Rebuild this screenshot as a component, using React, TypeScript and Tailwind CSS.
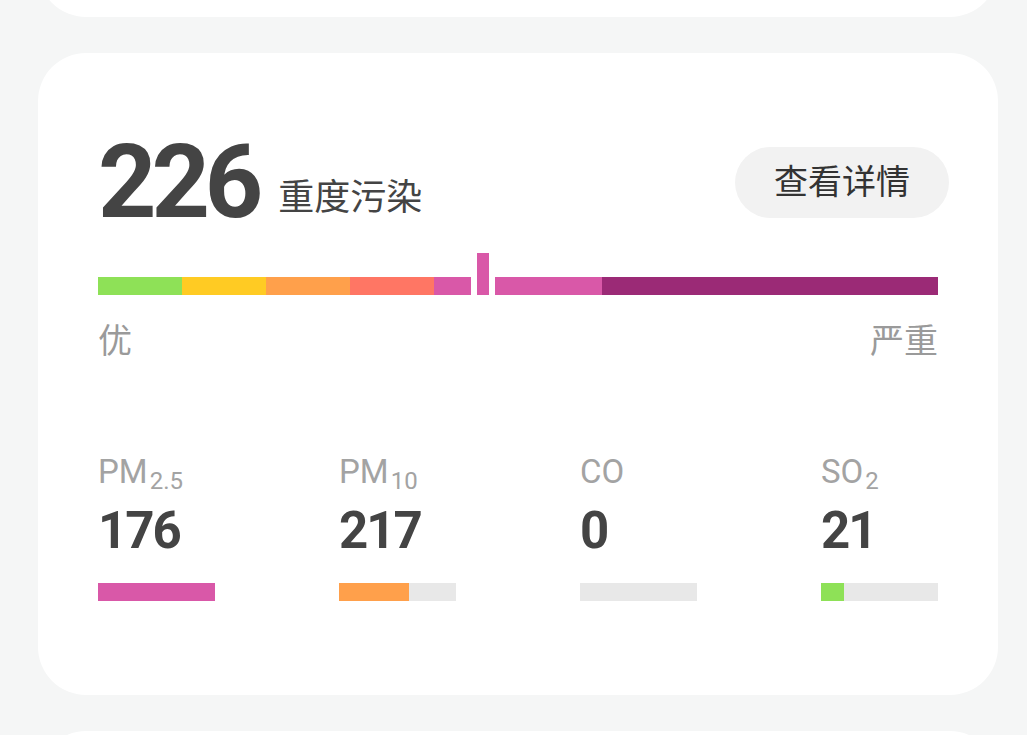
import React from 'react';

const scale = [
  { w: 'w-[84px]', color: 'bg-[#8ee157]' },
  { w: 'w-[84px]', color: 'bg-[#ffcb23]' },
  { w: 'w-[84px]', color: 'bg-[#ffa04b]' },
  { w: 'w-[84px]', color: 'bg-[#ff7664]' },
  { w: 'w-[168px]', color: 'bg-[#d958a8]' },
  { w: 'w-[336px]', color: 'bg-[#9b2a76]' },
];

const pollutants = [
  { name: 'PM', sub: '2.5', value: '176', fill: 117, color: 'bg-[#d958a8]' },
  { name: 'PM', sub: '10', value: '217', fill: 70, color: 'bg-[#ffa04b]' },
  { name: 'CO', sub: '', value: '0', fill: 0, color: 'bg-[#8ee157]' },
  { name: 'SO', sub: '2', value: '21', fill: 23, color: 'bg-[#8ee157]' },
];

function AqiCard() {
  return (
    <div className="w-[960px] ml-[38px] bg-white rounded-[48px] px-[60px] pt-[78px] pb-[94px]">
      {/* header */}
      <div className="flex items-center justify-between -mr-[11px] h-[102px]">
        <div className="flex items-end h-full">
          <span className="text-[102px] leading-none font-bold text-[#444444] tracking-[-0.05em]">226</span>
          <span className="ml-[20px] mb-[17px] text-[36px] leading-none text-[#444444]">重度污染</span>
        </div>
        <button className="w-[214px] h-[71px] rounded-full bg-[#f2f2f2] text-[34px] leading-none text-[#333333]">
          查看详情
        </button>
      </div>

      {/* scale bar */}
      <div className="relative mt-[20px] h-[42px] flex items-end">
        <div className="flex h-[18px] w-[840px]">
          {scale.map((s, i) => (
            <div key={i} className={`${s.w} h-full ${s.color}`} />
          ))}
        </div>
        <div className="absolute left-[373px] top-0 w-[24px] h-[42px] bg-white flex justify-center">
          <div className="w-[12px] h-full bg-[#d958a8]" />
        </div>
      </div>

      <div className="mt-[29px] flex justify-between text-[34px] leading-none text-[#9a9a9a]">
        <span>优</span>
        <span>严重</span>
      </div>

      {/* pollutants */}
      <div className="mt-[97px] flex gap-[124px]">
        {pollutants.map((p) => (
          <div key={p.name + p.sub} className="w-[117px]">
            <div className="text-[33px] leading-none text-[#a3a3a3]">
              {p.name}
              {p.sub && <sub className="text-[24px] ml-[2px]">{p.sub}</sub>}
            </div>
            <div className="mt-[17px] text-[51px] leading-none font-bold text-[#444444] tracking-[-0.04em]">
              {p.value}
            </div>
            <div className="mt-[27px] h-[18px] w-full bg-[#e8e8e8]">
              <div className={`h-full ${p.color}`} style={{ width: p.fill }} />
            </div>
          </div>
        ))}
      </div>
    </div>
  );
}

export default function App() {
  return (
    <div className="w-[1027px] h-[735px] overflow-hidden bg-[#f5f6f6] font-['Roboto','Noto_Sans_CJK_SC',sans-serif]">
      <div className="-mt-[200px] flex flex-col gap-[36px]">
        <div className="w-[960px] ml-[38px] h-[217px] bg-white rounded-[48px]" />
        <AqiCard />
        <div className="w-[960px] ml-[38px] h-[200px] bg-white rounded-[48px]" />
      </div>
    </div>
  );
}
